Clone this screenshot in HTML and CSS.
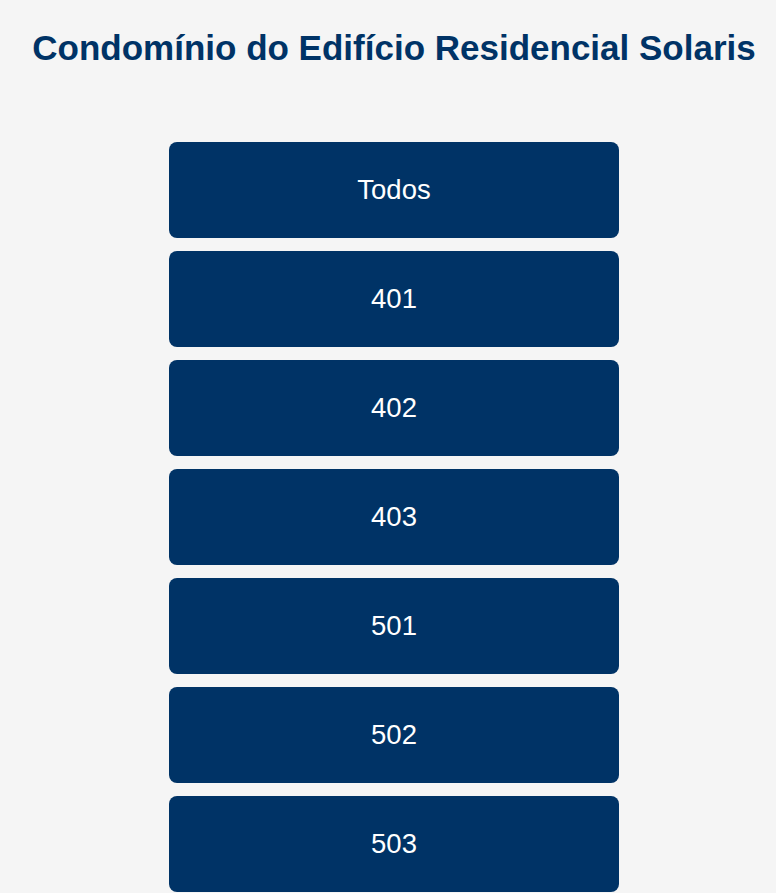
FILE: index.html
```html
<!DOCTYPE html>
<html lang="pt-BR">
<head>
  <meta charset="UTF-8" />
  <meta name="viewport" content="width=device-width, initial-scale=1.0"/>
  <title>Condomínio | Solaris</title>
  <link rel="stylesheet" href="styles.css">
</head>
<body>
  <div class="container">
    <h1>Condomínio do Edifício Residencial Solaris</h1>

    <div class="apartamentos">
      <button type="button" class="apto-btn">Todos</button>
      <button type="button" class="apto-btn">401</button>
      <button type="button" class="apto-btn">402</button>
      <button type="button" class="apto-btn">403</button>
      <button type="button" class="apto-btn">501</button>
      <button type="button" class="apto-btn">502</button>
      <button type="button" class="apto-btn">503</button>
    </div>
  </div>
</body>
</html>
```

FILE: styles.css
```css
body {
  margin: 0;
  padding: 0;
  font-family: "Liberation Sans", Arial, sans-serif;
  background-color: #f5f5f5;
}
.container {
  padding: 0 8px 0 20px;
}
h1 {
  text-align: center;
  color: #003366;
  font-size: 35px;
  font-weight: bold;
  margin: 28px 0 74px;
}
.apartamentos {
  display: flex;
  flex-direction: column;
  align-items: center;
  gap: 13px;
}
.apto-btn {
  width: 450px;
  height: 96px;
  background-color: #003366;
  color: #ffffff;
  border: none;
  border-radius: 8px;
  font-family: "Liberation Sans", Arial, sans-serif;
  font-size: 27.5px;
  cursor: pointer;
}
.apto-btn:hover {
  background-color: #00509e;
}
```
